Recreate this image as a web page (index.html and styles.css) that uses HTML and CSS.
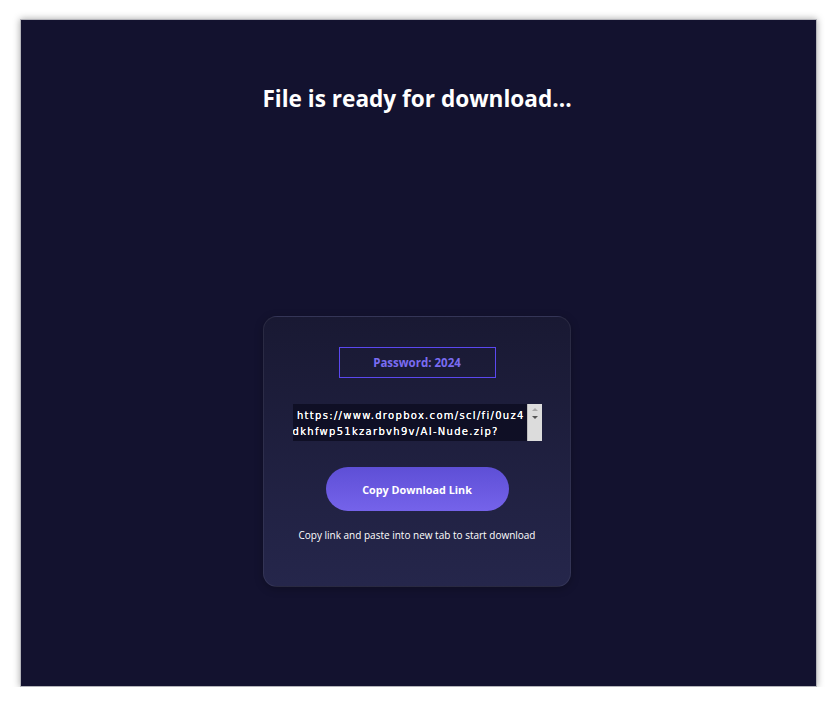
FILE: index.html
```html
<!DOCTYPE html>
<html lang="en">
<head>
<meta charset="utf-8">
<title>File is ready for download</title>
<link rel="stylesheet" href="styles.css">
</head>
<body>
<div class="frame">
  <h1 class="title">File is ready for download...</h1>
  <div class="card">
    <div class="password">Password: 2024</div>
    <div class="linkbox">
      <div class="linktext">
        <div class="line"> https://www.dropbox.com/scl/fi/0uz4</div>
        <div class="line">dkhfwp51kzarbvh9v/AI-Nude.zip?</div>
      </div>
      <div class="scrollbar">
        <span class="arrow up"></span>
        <span class="arrow down"></span>
      </div>
    </div>
    <button class="copy-btn">Copy Download Link</button>
    <p class="hint">Copy link and paste into new tab to start download</p>
  </div>
</div>
</body>
</html>
```
FILE: styles.css
```css
html, body {
  margin: 0;
  padding: 0;
  background: #ffffff;
}
body {
  font-family: "Open Sans", "Noto Sans", sans-serif;
}
.frame {
  margin: 19px 0 0 20px;
  width: 797px;
  height: 668px;
  box-sizing: border-box;
  padding-right: 3px;
  background: #13122f;
  border: 1px solid #b4b4ba;
  box-shadow: 0 0 7px rgba(0, 0, 0, 0.35);
  display: flex;
  flex-direction: column;
  align-items: center;
}
.title {
  margin: 63px 0 0;
  font-size: 22.6px;
  line-height: 32px;
  font-weight: 700;
  color: #ffffff;
}
.card {
  margin-top: 201px;
  width: 308px;
  height: 271px;
  box-sizing: border-box;
  border: 1px solid rgba(255, 255, 255, 0.07);
  border-radius: 14px;
  background: linear-gradient(180deg, #191933 0%, #25264b 100%);
  box-shadow: 0 2px 8px rgba(0, 0, 0, 0.25);
  padding-top: 30px;
  display: flex;
  flex-direction: column;
  align-items: center;
}
.password {
  width: 157px;
  height: 31px;
  box-sizing: border-box;
  border: 1px solid #5b48f0;
  display: flex;
  align-items: center;
  justify-content: center;
  color: #7a6cf2;
  font-size: 11.5px;
  font-weight: 700;
}
.linkbox {
  margin-top: 26px;
  width: 249px;
  height: 37px;
  display: flex;
  background: #0f0f25;
}
.linktext {
  flex: 1;
  min-width: 0;
  padding: 4px 0 0 0;
  font-family: "DejaVu Sans", sans-serif;
  font-size: 10px;
  line-height: 16px;
  letter-spacing: 1.3px;
  color: #ffffff;
  text-shadow: 0 0 0.4px #ffffff;
  overflow: hidden;
}
.line {
  white-space: pre;
}
.scrollbar {
  width: 14px;
  background: #dcdcdc;
  border-left: 1px solid #bdbdbd;
  display: flex;
  flex-direction: column;
  align-items: center;
  padding-top: 4px;
  gap: 5px;
}
.arrow {
  width: 0;
  height: 0;
  border-left: 3px solid transparent;
  border-right: 3px solid transparent;
}
.arrow.up {
  border-bottom: 3px solid #a8a8a8;
}
.arrow.down {
  border-top: 3px solid #555555;
}
.copy-btn {
  margin-top: 26px;
  width: 183px;
  height: 44px;
  border: none;
  border-radius: 22px;
  background: linear-gradient(180deg, #5e4fd6 0%, #7563ea 100%);
  color: #ffffff;
  font-family: "Open Sans", "Noto Sans", sans-serif;
  font-size: 10.8px;
  font-weight: 700;
  cursor: pointer;
}
.hint {
  margin: 17px 0 0;
  font-size: 10px;
  line-height: 15px;
  color: #ffffff;
}
```
